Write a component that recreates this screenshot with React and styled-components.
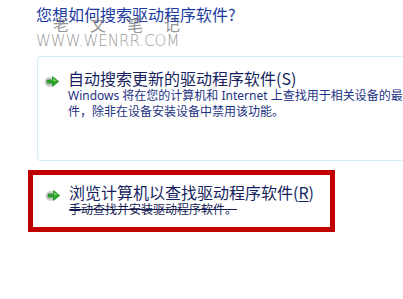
import styled, { createGlobalStyle } from "styled-components";

const GlobalStyle = createGlobalStyle`
  html, body {
    margin: 0;
    padding: 0;
    background: #ffffff;
    overflow: hidden;
  }
  body {
    font-family: "Noto Sans", "Noto Sans CJK SC", sans-serif;
  }
`;

const Page = styled.div`
  position: relative;
  width: 403px;
  height: 299px;
  padding-top: 4px;
  box-sizing: border-box;
  display: flex;
  flex-direction: column;
  overflow: hidden;
`;

const Heading = styled.h1`
  margin: 0 0 0 36px;
  font-family: "Noto Sans CJK SC", sans-serif;
  font-weight: 400;
  font-size: 16px;
  line-height: 20px;
  color: #1a3aa0;
  white-space: nowrap;
`;

/* watermark that lies over the heading */
const Watermark = styled.div`
  position: absolute;
  left: 36px;
  top: 15px;
  display: flex;
  flex-direction: column;
  pointer-events: none;
`;

const MarkChars = styled.div`
  display: flex;
  gap: 21px;
  padding-left: 17px;
  font-family: "Noto Sans CJK SC", sans-serif;
  font-size: 16px;
  line-height: 19px;
  color: rgba(120, 120, 120, 0.8);
`;

const MarkUrl = styled.div`
  font-family: "DejaVu Sans", sans-serif;
  font-size: 15px;
  line-height: 15px;
  font-weight: 200;
  color: #9a9a9a;
`;

const Card = styled.div`
  margin: 32px 0 0 37px;
  width: 420px;
  height: 105px;
  box-sizing: border-box;
  border: 1px solid #cdeff6;
  border-radius: 3px;
  padding: 11px 0 0 6px;
`;

const Highlight = styled.div`
  margin: 9px 0 0 28px;
  width: 307px;
  height: 62px;
  box-sizing: border-box;
  border: 5px solid #c00000;
  padding: 7px 0 0 12px;
`;

const Option = styled.div`
  display: flex;
  align-items: flex-start;
`;

const ArrowBox = styled.div`
  flex: 0 0 24px;
  padding-top: ${({ $top }) => $top}px;
`;

const Texts = styled.div`
  display: flex;
  flex-direction: column;
`;

const OptionTitle = styled.div`
  font-family: "Noto Sans CJK SC", sans-serif;
  font-size: 16px;
  line-height: 20px;
  color: #161f5e;
  white-space: nowrap;

  u {
    text-decoration-thickness: 1px;
    text-underline-offset: 2px;
  }
`;

const Desc = styled.div`
  font-family: "Noto Sans", "Noto Sans CJK SC", sans-serif;
  font-size: 12px;
  line-height: 16px;
  color: ${({ $dark }) => ($dark ? "#141b52" : "#1d3283")};
  white-space: nowrap;
  text-decoration: ${({ $struck }) => ($struck ? "line-through" : "none")};
  text-decoration-color: #141b52;
`;

function GreenArrow() {
  return (
    <svg width="16" height="13" viewBox="0 0 16 13">
      <ellipse cx="5.5" cy="7" rx="5" ry="5" fill="#d4d4d4" />
      <ellipse cx="5.5" cy="7" rx="3.5" ry="3.5" fill="#bcbcbc" />
      <path
        d="M3.2 5.1 H8.6 V1.6 L14.6 6.5 L8.6 11.4 V7.9 H3.2 Z"
        fill="#2fa82b"
        stroke="#178a1c"
        strokeWidth="0.8"
        strokeLinejoin="round"
      />
      <path d="M3.8 5.7 H9.2 V3.2 L12.8 6.1 Z" fill="#9ae48a" opacity="0.75" />
    </svg>
  );
}

export default function App() {
  return (
    <>
      <GlobalStyle />
      <Page>
        <Heading>您想如何搜索驱动程序软件?</Heading>
        <Watermark>
          <MarkChars>
            <span>老</span>
            <span>文</span>
            <span>笔</span>
            <span>记</span>
          </MarkChars>
          <MarkUrl>WWW.WENRR.COM</MarkUrl>
        </Watermark>

        <Card>
          <Option>
            <ArrowBox $top={3}>
              <GreenArrow />
            </ArrowBox>
            <Texts>
              <OptionTitle>自动搜索更新的驱动程序软件(S)</OptionTitle>
              <Desc>Windows 将在您的计算机和 Internet 上查找用于相关设备的最新驱动程序软</Desc>
              <Desc>件，除非在设备安装设备中禁用该功能。</Desc>
            </Texts>
          </Option>
        </Card>

        <Highlight>
          <Option>
            <ArrowBox $top={3}>
              <GreenArrow />
            </ArrowBox>
            <Texts>
              <OptionTitle>
                浏览计算机以查找驱动程序软件(<u>R</u>)
              </OptionTitle>
              <Desc $dark $struck>
                手动查找并安装驱动程序软件。
              </Desc>
            </Texts>
          </Option>
        </Highlight>
      </Page>
    </>
  );
}
